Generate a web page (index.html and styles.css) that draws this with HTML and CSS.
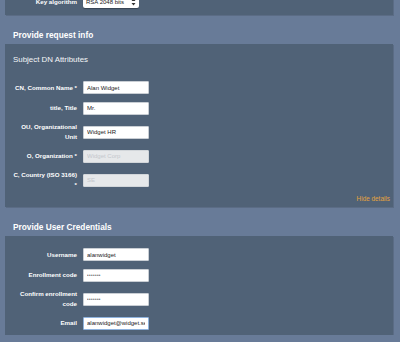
FILE: index.html
```html
<!DOCTYPE html>
<html>
<head>
<meta charset="utf-8">
<link rel="stylesheet" href="styles.css">
</head>
<body>
<section class="panel panel-top">
  <div class="row">
    <label class="lbl">Key algorithm</label>
    <div class="select">
      <span class="select-text">RSA 2048 bits</span>
      <svg class="select-arrows" width="5" height="8" viewBox="0 0 5 8"><path d="M2.5 0.5 L4.5 3 H0.5 Z M2.5 7.5 L4.5 5 H0.5 Z" fill="#333"/></svg>
    </div>
  </div>
</section>

<h2 class="heading">Provide request info</h2>
<section class="panel panel-dn">
  <div class="subtitle">Subject DN Attributes</div>
  <div class="rows">
    <div class="row"><label class="lbl">CN, Common Name *</label><input class="field" value="Alan Widget"></div>
    <div class="row"><label class="lbl">title, Title</label><input class="field" value="Mr."></div>
    <div class="row"><label class="lbl">OU, Organizational Unit</label><input class="field" value="Widget HR"></div>
    <div class="row"><label class="lbl">O, Organization *</label><input class="field" value="Widget Corp" disabled></div>
    <div class="row"><label class="lbl">C, Country (ISO 3166) *</label><input class="field" value="SE" disabled></div>
  </div>
  <div class="details"><a class="details-link">Hide details</a></div>
</section>

<h2 class="heading">Provide User Credentials</h2>
<section class="panel panel-cred">
  <div class="rows">
    <div class="row"><label class="lbl">Username</label><input class="field" value="alanwidget"></div>
    <div class="row"><label class="lbl">Enrollment code</label><input class="field field-pw" type="password" value="abcdefg"></div>
    <div class="row"><label class="lbl">Confirm enrollment code</label><input class="field field-pw" type="password" value="abcdefg"></div>
    <div class="row"><label class="lbl">Email</label><input class="field field-focus" value="alanwidget@widget.se"></div>
  </div>
</section>
</body>
</html>
```
FILE: styles.css
```css
html, body {
  margin: 0;
  padding: 0;
}
body {
  background: #687b98;
  font-family: "Liberation Sans", Arial, sans-serif;
  color: #fff;
  overflow: hidden;
}
.panel {
  background: #506277;
  margin: 0 7px 0 5px;
  padding: 0 3px 0 8px;
  box-shadow: 1px 1px 0 rgba(0, 0, 0, 0.12);
}
.panel-top {
  margin-top: -13px;
  padding-top: 8px;
  padding-bottom: 7px;
}
.panel-dn {
  padding-top: 11px;
  padding-bottom: 4px;
}
.panel-cred {
  padding-top: 12px;
  padding-bottom: 5.5px;
}
.heading {
  margin: 0;
  padding: 14px 0 3px 13px;
  font-size: 8.3px;
  line-height: 12px;
  font-weight: bold;
  color: #fff;
}
.subtitle {
  font-size: 7.9px;
  line-height: 10px;
  color: #f4f6f8;
  margin-bottom: 16px;
}
.rows {
  display: flex;
  flex-direction: column;
  gap: 7.5px;
}
.row {
  display: flex;
  align-items: center;
  gap: 6px;
}
.lbl {
  width: 64px;
  flex: none;
  text-align: right;
  font-size: 6.2px;
  line-height: 10px;
  font-weight: bold;
  color: #fff;
}
.field {
  box-sizing: border-box;
  width: 66px;
  height: 13px;
  margin: 0;
  padding: 0 3px;
  border: 1px solid #c9ced4;
  border-radius: 1px;
  background: #fff;
  font-family: "Liberation Sans", Arial, sans-serif;
  font-size: 6px;
  color: #222;
  outline: none;
}
.field-pw {
  font-size: 4.5px;
  color: #666;
  letter-spacing: 0.4px;
}
.field:disabled {
  background: #e6e8ea;
  border-color: #d2d6da;
  color: #c3c7cc;
}
.field-focus {
  border-color: #8fb3de;
}
.select {
  box-sizing: border-box;
  width: 56px;
  height: 13px;
  display: flex;
  align-items: center;
  justify-content: space-between;
  padding: 0 3px;
  background: #fff;
  border-radius: 2px;
  box-shadow: 0 0.5px 1px rgba(0, 0, 0, 0.3);
}
.select-text {
  font-size: 6px;
  color: #222;
}
.select-arrows {
  display: block;
}
.details {
  text-align: right;
  margin-top: 4px;
  font-size: 6.4px;
  line-height: 9px;
}
.details-link {
  color: #e5a33e;
}
```
